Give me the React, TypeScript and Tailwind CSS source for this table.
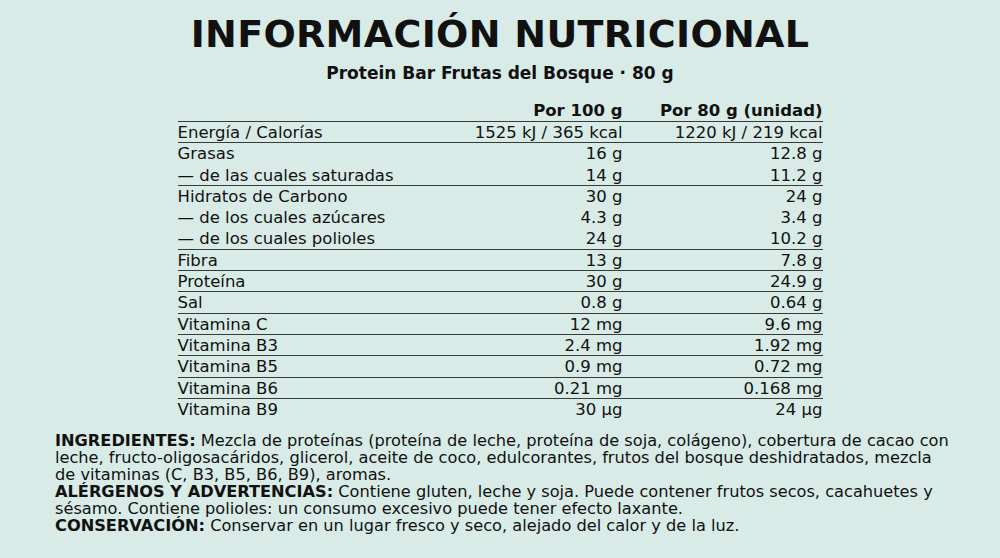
const rows: { label: string; a: string; b: string; line?: boolean }[] = [
  { label: "Energía / Calorías", a: "1525 kJ / 365 kcal", b: "1220 kJ / 219 kcal", line: true },
  { label: "Grasas", a: "16 g", b: "12.8 g" },
  { label: "— de las cuales saturadas", a: "14 g", b: "11.2 g", line: true },
  { label: "Hidratos de Carbono", a: "30 g", b: "24 g" },
  { label: "— de los cuales azúcares", a: "4.3 g", b: "3.4 g" },
  { label: "— de los cuales polioles", a: "24 g", b: "10.2 g", line: true },
  { label: "Fibra", a: "13 g", b: "7.8 g", line: true },
  { label: "Proteína", a: "30 g", b: "24.9 g", line: true },
  { label: "Sal", a: "0.8 g", b: "0.64 g", line: true },
  { label: "Vitamina C", a: "12 mg", b: "9.6 mg", line: true },
  { label: "Vitamina B3", a: "2.4 mg", b: "1.92 mg", line: true },
  { label: "Vitamina B5", a: "0.9 mg", b: "0.72 mg", line: true },
  { label: "Vitamina B6", a: "0.21 mg", b: "0.168 mg", line: true },
  { label: "Vitamina B9", a: "30 µg", b: "24 µg" },
];

export default function App() {
  return (
    <div
      className="h-[558px] w-[1000px] overflow-hidden bg-[#d8ebe7] text-[#111]"
      style={{ fontFamily: '"DejaVu Sans", "Noto Sans", sans-serif' }}
    >
      <h1 className="pt-[12px] text-center text-[38px] font-bold leading-[44px] tracking-[0.3px]">
        INFORMACIÓN NUTRICIONAL
      </h1>
      <p className="mt-[7px] text-center text-[17px] font-bold leading-[20px]">
        Protein Bar Frutas del Bosque · 80 g
      </p>

      <div className="mx-auto mt-[17px] w-[645px] text-[16.5px] leading-[22px]">
        <div className="grid h-[22px] grid-cols-[245px_200px_200px] border-b-[1.5px] border-[#3a3a3a] font-bold">
          <div />
          <div className="text-right leading-[21px]">Por 100 g</div>
          <div className="text-right leading-[21px]">Por 80 g (unidad)</div>
        </div>
        {rows.map((r) => (
          <div
            key={r.label}
            className={`grid h-[21.3px] grid-cols-[245px_200px_200px] border-b-[1.5px] ${
              r.line ? "border-[#3a3a3a]" : "border-transparent"
            }`}
          >
            <div className="whitespace-nowrap">{r.label}</div>
            <div className="whitespace-nowrap text-right">{r.a}</div>
            <div className="whitespace-nowrap text-right">{r.b}</div>
          </div>
        ))}
      </div>

      <div className="mt-[12px] pl-[55px] text-[16.2px] leading-[17px]">
        <div className="whitespace-nowrap">
          <b>INGREDIENTES:</b> Mezcla de proteínas (proteína de leche, proteína de soja, colágeno), cobertura de cacao con
        </div>
        <div className="whitespace-nowrap">
          leche, fructo-oligosacáridos, glicerol, aceite de coco, edulcorantes, frutos del bosque deshidratados, mezcla
        </div>
        <div className="whitespace-nowrap">de vitaminas (C, B3, B5, B6, B9), aromas.</div>
        <div className="whitespace-nowrap">
          <b>ALÉRGENOS Y ADVERTENCIAS:</b> Contiene gluten, leche y soja. Puede contener frutos secos, cacahuetes y
        </div>
        <div className="whitespace-nowrap">sésamo. Contiene polioles: un consumo excesivo puede tener efecto laxante.</div>
        <div className="whitespace-nowrap">
          <b>CONSERVACIÓN:</b> Conservar en un lugar fresco y seco, alejado del calor y de la luz.
        </div>
      </div>
    </div>
  );
}
